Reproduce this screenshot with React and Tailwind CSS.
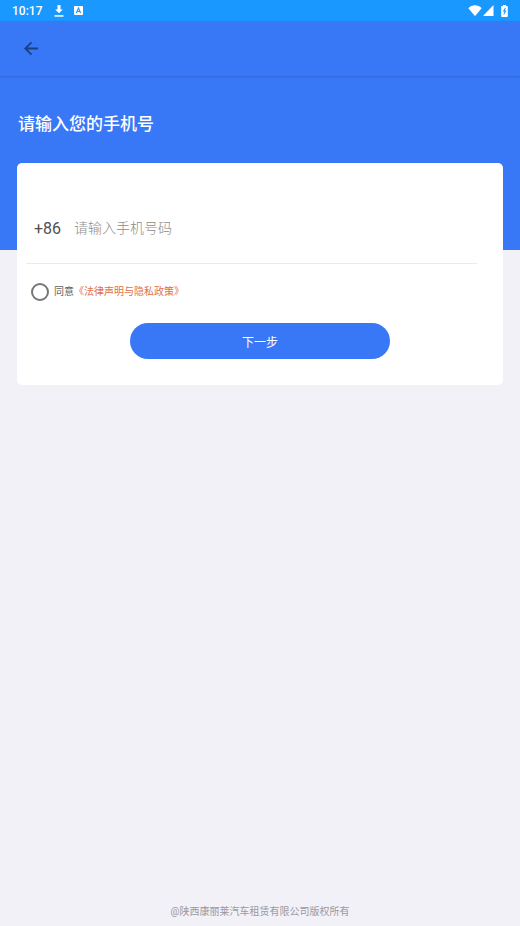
import { useState } from "react";

function DownloadIcon() {
  return (
    <svg viewBox="0 0 10 13" className="h-[13px] w-[10px]" fill="currentColor" aria-hidden="true">
      <path d="M3.500 1h3v4.500h2.300L5 9.300 1.200 5.500h2.300z" />
      <path d="M.5 11.200h9v1.500h-9z" />
    </svg>
  );
}

function KeyboardIcon() {
  return (
    <svg viewBox="0 0 9 9" className="size-[9px]" aria-hidden="true">
      <rect width="9" height="9" rx="1" fill="#fff" />
      <path d="M2.400 7 4.500 2 6.600 7M3.200 5.500h2.600" fill="none" stroke="#1998ff" strokeWidth="1.100" />
    </svg>
  );
}

function WifiIcon() {
  return (
    <svg viewBox="0 0 14 11" className="h-[11px] w-[14px]" fill="currentColor" aria-hidden="true">
      <path d="M.4 3.200C4-.6 10-.6 13.600 3.200L7.600 10.500Q7 11.200 6.400 10.500Z" />
    </svg>
  );
}

function SignalIcon() {
  return (
    <svg viewBox="0 0 11 11" className="size-[11px]" fill="currentColor" aria-hidden="true">
      <path d="M10.500 0v11H0z" />
    </svg>
  );
}

function BatteryIcon() {
  return (
    <svg viewBox="0 0 7 12" className="h-[12px] w-[7px]" aria-hidden="true">
      <path d="M2 0h3v1h1q.8 0 .8.800v9.400q0 .8-.8.800H1q-.8 0-.8-.8V1.800Q.2 1 1 1h1z" fill="#fff" />
      <path d="M4.300 3 2.200 6.200h1.300L2.900 9.500 5 5.800H3.800z" fill="#1998ff" stroke="#1998ff" strokeWidth=".5" />
    </svg>
  );
}

function BackIcon() {
  return (
    <svg viewBox="0 0 16 16" className="size-4" fill="none" stroke="#1c3f86" strokeWidth="1.800" aria-hidden="true">
      <path d="M15 7.500H2.300M8.500 1.300 2.300 7.500l6.200 6.200" />
    </svg>
  );
}

function StatusBar() {
  return (
    <div className="flex h-[21px] items-center bg-[#1998ff] px-3 text-white">
      <span className="text-[12px] leading-5 font-medium">10:17</span>
      <span className="ml-3 flex items-center gap-[10px]">
        <DownloadIcon />
        <KeyboardIcon />
      </span>
      <span className="ml-auto flex items-center">
        <WifiIcon />
        <span className="ml-px">
          <SignalIcon />
        </span>
        <span className="ml-[7px]">
          <BatteryIcon />
        </span>
      </span>
    </div>
  );
}

export default function App() {
  const [phone, setPhone] = useState("");
  const [agreed, setAgreed] = useState(false);

  return (
    <div className="flex min-h-screen flex-col bg-[#f2f1f8] font-[Roboto,'Noto_Sans_CJK_SC',sans-serif]">
      <StatusBar />
      <header className="z-10 flex h-[55px] items-center bg-[#3878f7] px-[23px] shadow-[0_1px_2px_rgba(0,0,0,0.14)]">
        <button type="button" aria-label="返回">
          <BackIcon />
        </button>
      </header>
      <div className="h-[174px] bg-[#3878f7] px-[18px] pt-9">
        <h1 className="text-[17px] leading-6 font-medium text-white">请输入您的手机号</h1>
      </div>
      <form
        className="mx-[17px] -mt-[87px] rounded-[5px] bg-white pt-[30px] pb-[26px]"
        onSubmit={(event) => event.preventDefault()}
      >
        <div className="mr-[26px] ml-[9px] flex h-[71px] items-center border-b border-[#ebebed] pl-2">
          <label htmlFor="phone" className="w-10 pt-px text-[16px] leading-6 text-[#505050]">
            +86
          </label>
          <input
            id="phone"
            type="tel"
            value={phone}
            onChange={(event) => setPhone(event.target.value)}
            placeholder="请输入手机号码"
            className="min-w-0 flex-1 text-[14px] leading-6 font-light text-[#505050] outline-none placeholder:text-[#8c8c8c]"
          />
        </div>
        <div className="mt-[18px] flex h-5 items-center pl-[14px] text-[10px] leading-5">
          <input
            id="agree"
            type="checkbox"
            checked={agreed}
            onChange={(event) => setAgreed(event.target.checked)}
            className="mr-[5px] size-[18px] appearance-none rounded-full border-2 border-[#777] checked:bg-[#3878f7]"
          />
          <label htmlFor="agree" className="text-[#606060]">
            同意
          </label>
          <a href="#policy" className="text-[#e0704a]">
            《法律声明与隐私政策》
          </a>
        </div>
        <button
          type="submit"
          className="mx-auto mt-[21px] block h-9 w-[260px] rounded-full bg-[#3878f7] pt-[3px] text-[12px] leading-5 text-white"
        >
          下一步
        </button>
      </form>
      <footer className="mt-auto pb-1 text-center text-[10px] leading-5 text-[#99999d]">
        @陕西康丽莱汽车租赁有限公司版权所有
      </footer>
    </div>
  );
}
